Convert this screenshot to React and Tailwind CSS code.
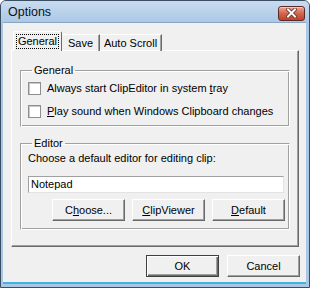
import React from "react";

// classic 3d push button
function Btn({ children, primary = false, className = "" }) {
  return (
    <div
      className={
        "h-[22px] w-[73px] flex items-center justify-center bg-[#f0f0f0] text-[11px] text-black " +
        (primary
          ? "border border-[#404040] shadow-[inset_1px_1px_0_#ffffff,inset_-1px_-1px_0_#696969,inset_-2px_-2px_0_#a0a0a0] "
          : "border-t border-l border-t-white border-l-white border-r border-b border-r-[#696969] border-b-[#696969] shadow-[inset_-1px_-1px_0_#a0a0a0] ") +
        className
      }
    >
      {children}
    </div>
  );
}

function Check({ children }) {
  return (
    <div className="flex items-center h-[13px] gap-[6px]">
      <div className="w-[13px] h-[13px] bg-white border border-[#8f8f8f] shadow-[inset_1px_1px_0_#c8c8c8]" />
      <span className="leading-[13px]">{children}</span>
    </div>
  );
}

function Group({ title, className = "", children }) {
  return (
    <fieldset
      className={
        "border border-t-[#a0a0a0] border-l-[#a0a0a0] border-r-white border-b-white shadow-[inset_1px_1px_0_#ffffff,inset_-1px_-1px_0_#a0a0a0] mx-[8px] " +
        className
      }
    >
      <legend className="ml-[4px] px-[2px] leading-[13px]">{title}</legend>
      {children}
    </fieldset>
  );
}

export default function App() {
  return (
    <div className="w-[310px] h-[288px] flex flex-col overflow-hidden rounded-t-[6px] border border-[#3b4d60] bg-[#a9c7e5] font-[Tahoma,'Liberation_Sans',Arial,sans-serif] text-[11px] text-black">
      {/* Title bar */}
      <div className="h-[21px] shrink-0 flex items-center justify-between pl-[7px] pr-[4px] bg-gradient-to-b from-[#c9dcf0] to-[#aac8e6]">
        <span className="text-[12.5px] text-[#111] leading-none mt-[1px]">Options</span>
        <div className="w-[27px] h-[15px] mt-[3px] rounded-[3px] border border-[#5e2a25] bg-gradient-to-b from-[#e9a593] via-[#d2654e] to-[#c0412c] flex items-center justify-center shadow-[inset_0_1px_0_#f6c8bb]">
          <svg width="11" height="10" viewBox="0 0 11 10">
            <path d="M2 1.5 L9 8.5 M9 1.5 L2 8.5" stroke="#5b2a22" strokeWidth="3.6" strokeLinecap="square" />
            <path d="M2 1.5 L9 8.5 M9 1.5 L2 8.5" stroke="#ffffff" strokeWidth="2" strokeLinecap="square" />
          </svg>
        </div>
      </div>

      {/* Client area */}
      <div className="flex-1 flex flex-col ml-[2px] mr-[3px] mb-[3px] border-t border-[#8aa6c2] bg-[#f0f0f0] border-b-[2px] border-b-[#3db5dc]">
        <div className="flex flex-col pl-[8px] pt-[8px]">
          {/* Tabs */}
          <div className="flex items-end h-[20px] relative z-10 -mb-[1px] ml-[2px]">
            <div className="h-[20px] w-[49px] bg-[#f0f0f0] border-t border-l border-white border-r border-r-[#696969] rounded-t-[2px] flex items-start justify-center pt-[2px]">
              <span className="border border-dotted border-black px-[1px] leading-[13px]">General</span>
            </div>
            <div className="h-[17px] w-[38px] border-t border-white border-r border-r-[#696969] shadow-[inset_-1px_0_0_#a0a0a0] flex items-center justify-center">
              Save
            </div>
            <div className="h-[17px] w-[62px] border-t border-white border-r border-r-[#696969] shadow-[inset_-1px_0_0_#a0a0a0] flex items-center justify-center">
              Auto Scroll
            </div>
          </div>

          {/* Tab panel */}
          <div className="w-[288px] h-[197px] border-t border-l border-white border-r border-b border-r-[#696969] border-b-[#696969] shadow-[inset_-1px_-1px_0_#a0a0a0] flex flex-col">
            <Group title="General" className="mt-[13px] h-[63px] flex flex-col pl-[7px]">
              <div className="flex flex-col gap-[10px] pt-[5px]">
                <Check>
                  Always start ClipEditor in system <span className="underline">t</span>ray
                </Check>
                <Check>
                  <span className="underline">P</span>lay sound when Windows Clipboard changes
                </Check>
              </div>
            </Group>

            <Group title="Editor" className="mt-[10px] h-[93px] pl-[7px]">
              <div className="pt-[2px] leading-[13px]">Choose a default editor for editing clip:</div>
              <div className="mt-[11px] w-[256px] h-[17px] bg-white border border-t-[#a0a0a0] border-l-[#a0a0a0] border-r-[#e3e3e3] border-b-[#e3e3e3] flex items-center pl-[2px]">
                Notepad
              </div>
              <div className="flex gap-[7px] mt-[6px] ml-[24px]">
                <Btn>
                  C<span className="underline">h</span>oose...
                </Btn>
                <Btn>
                  <span className="underline">C</span>lipViewer
                </Btn>
                <Btn>
                  <span className="underline">D</span>efault
                </Btn>
              </div>
            </Group>
          </div>

          {/* Dialog buttons */}
          <div className="flex justify-end gap-[8px] mt-[8px] w-[289px]">
            <Btn primary>OK</Btn>
            <Btn>Cancel</Btn>
          </div>
        </div>
      </div>
    </div>
  );
}
